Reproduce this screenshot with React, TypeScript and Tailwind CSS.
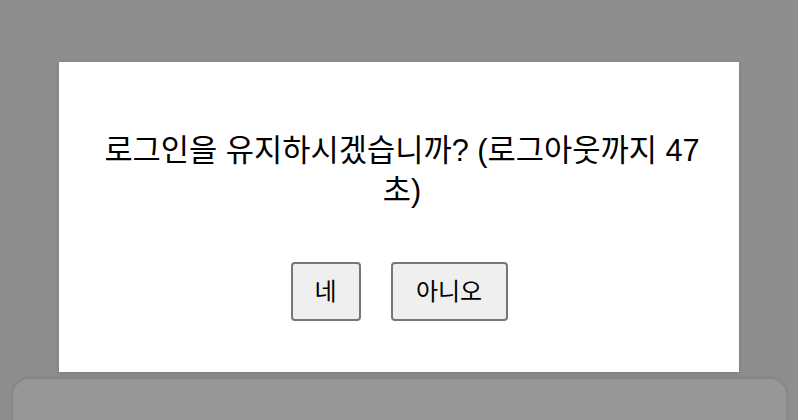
import { useState } from "react";

const FONT = "font-['Liberation_Sans','Noto_Sans_CJK_KR',sans-serif]";

const App = () => {
  const [seconds] = useState(47);

  return (
    <div className={`h-[420px] w-full overflow-hidden bg-[#8e8e8e] flex flex-col items-center pt-[62px] ${FONT}`}>
      {/* 세션 유지 모달 */}
      <div className="w-[680px] bg-white shadow-[0_1px_4px_rgba(0,0,0,0.15)] flex flex-col items-center px-[38px] pt-[69px] pb-[51px]">
        <p className="text-[30.7px] leading-[40px] text-black text-center pl-[6px]">
          로그인을 유지하시겠습니까? (로그아웃까지 {seconds} 초)
        </p>
        <div className="flex gap-[30px] mt-[51px]">
          <button className="w-[70px] h-[59px] border-2 border-[#767676] rounded-[4px] bg-[#efefef] text-[24px] text-black">
            네
          </button>
          <button className="w-[117px] h-[59px] border-2 border-[#767676] rounded-[4px] bg-[#efefef] text-[24px] text-black">
            아니오
          </button>
        </div>
      </div>

      {/* 뒤쪽 카드 */}
      <div className="mt-[7px] w-[773px] h-[80px] shrink-0 rounded-2xl bg-[#979797] shadow-[0_-1px_4px_rgba(0,0,0,0.12)]" />
    </div>
  );
};

export default App;
